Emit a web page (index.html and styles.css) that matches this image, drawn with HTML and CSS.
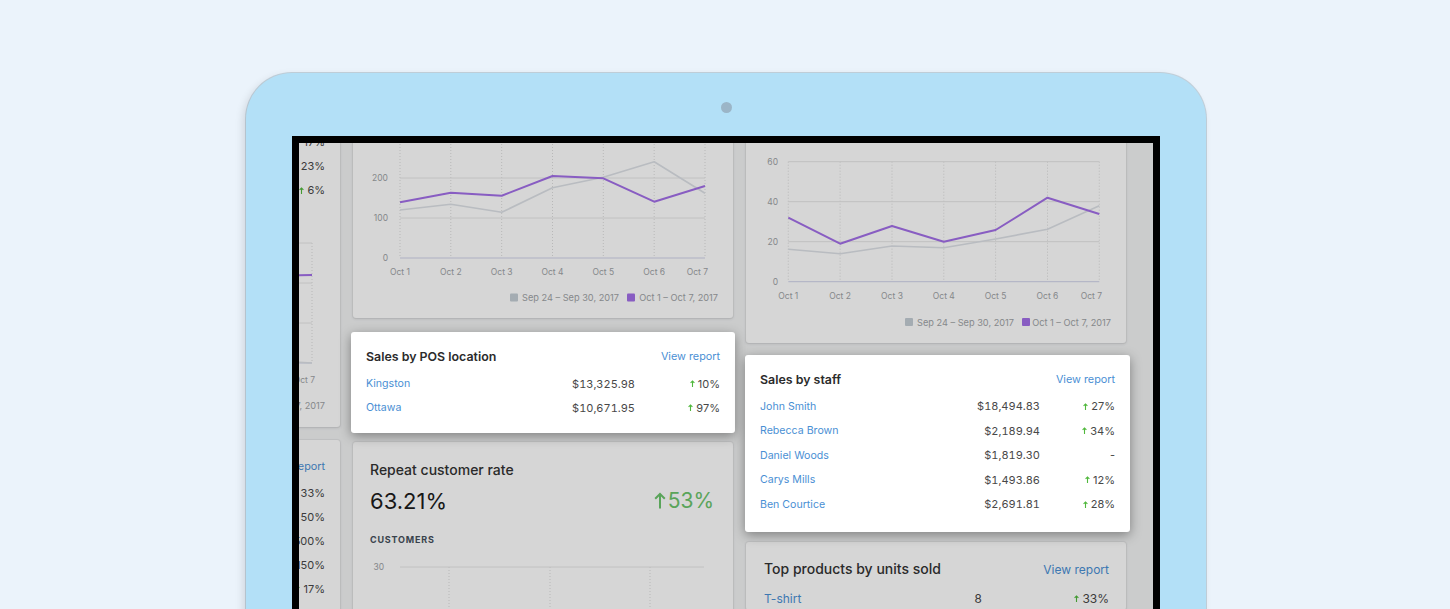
FILE: index.html
```html
<!DOCTYPE html>
<html lang="en">
<head>
<meta charset="utf-8">
<title>Dashboard on tablet</title>
<link rel="stylesheet" href="styles.css">
</head>
<body>
<div class="tablet">
  <div class="camera"></div>
  <div class="screen">
    <div class="dash">
      <!-- partially visible left column -->
      <div class="col col0">
        <div class="card cardA">
          <div class="rows">
            <div class="row r85"><span class="link">Online Store</span><span class="amt">$4,512.30</span><span class="pct"><svg class="arr" viewBox="0 0 5 7"><path d="M2.5 7V1M0.6 2.9L2.5 1L4.4 2.9"/></svg>17%</span></div>
            <div class="row r85"><span class="link">Point of Sale</span><span class="amt">$3,120.75</span><span class="pct"><svg class="arr" viewBox="0 0 5 7"><path d="M2.5 7V1M0.6 2.9L2.5 1L4.4 2.9"/></svg>23%</span></div>
            <div class="row r85"><span class="link">Facebook</span><span class="amt">$1,024.10</span><span class="pct"><svg class="arr" viewBox="0 0 5 7"><path d="M2.5 7V1M0.6 2.9L2.5 1L4.4 2.9"/></svg>6%</span></div>
          </div>
          <svg class="chart" width="380" height="225" viewBox="0 0 380 225">
            <g class="vgrid">
              <line x1="47" y1="41" x2="47" y2="161"/><line x1="97.8" y1="41" x2="97.8" y2="161"/><line x1="148.7" y1="41" x2="148.7" y2="161"/><line x1="199.5" y1="41" x2="199.5" y2="161"/><line x1="250.3" y1="41" x2="250.3" y2="161"/><line x1="301.2" y1="41" x2="301.2" y2="161"/><line x1="352" y1="41" x2="352" y2="161"/>
            </g>
            <g class="hgrid"><line x1="47" y1="41" x2="352" y2="41"/><line x1="47" y1="81" x2="352" y2="81"/><line x1="47" y1="121" x2="352" y2="121"/></g>
            <line class="base" x1="47" y1="161" x2="352" y2="161"/>
            <g class="ax"><text x="35" y="44" text-anchor="end">30</text><text x="35" y="84" text-anchor="end">20</text><text x="35" y="124" text-anchor="end">10</text><text x="35" y="164" text-anchor="end">0</text></g>
            <polyline class="l-gray" points="47,130 97.8,120 148.7,135 199.5,140 250.3,150 301.2,158 352,161"/>
            <polyline class="l-purple" points="47,110 97.8,96 148.7,104 199.5,88 250.3,92 301.2,74 352,73"/>
            <g class="ax"><text x="47" y="181" text-anchor="middle">Oct 1</text><text x="97.8" y="181" text-anchor="middle">Oct 2</text><text x="148.7" y="181" text-anchor="middle">Oct 3</text><text x="199.5" y="181" text-anchor="middle">Oct 4</text><text x="250.3" y="181" text-anchor="middle">Oct 5</text><text x="301.2" y="181" text-anchor="middle">Oct 6</text><text x="355" y="181" text-anchor="end">Oct 7</text></g>
            <rect class="sq-gray" x="157" y="199.5" width="8" height="8" rx="1"/><text class="lg" x="266" y="207" text-anchor="end">Sep 24 – Sep 30, 2017</text>
            <rect class="sq-purple" x="274" y="199.5" width="8" height="8" rx="1"/><text class="lg" x="365" y="207" text-anchor="end">Oct 1 – Oct 7, 2017</text>
          </svg>
        </div>
        <div class="card cardB">
          <div class="head h28"><span class="title">Sales by traffic source</span><span class="link">View report</span></div>
          <div class="row r85"><span class="link">Direct</span><span class="amt">$812.40</span><span class="pct"><svg class="arr" viewBox="0 0 5 7"><path d="M2.5 7V1M0.6 2.9L2.5 1L4.4 2.9"/></svg>33%</span></div>
          <div class="row r85"><span class="link">Search</span><span class="amt">$640.00</span><span class="pct"><svg class="arr" viewBox="0 0 5 7"><path d="M2.5 7V1M0.6 2.9L2.5 1L4.4 2.9"/></svg>50%</span></div>
          <div class="row r85"><span class="link">Social</span><span class="amt">$310.25</span><span class="pct"><svg class="arr" viewBox="0 0 5 7"><path d="M2.5 7V1M0.6 2.9L2.5 1L4.4 2.9"/></svg>500%</span></div>
          <div class="row r85"><span class="link">Email</span><span class="amt">$204.80</span><span class="pct"><svg class="arr" viewBox="0 0 5 7"><path d="M2.5 7V1M0.6 2.9L2.5 1L4.4 2.9"/></svg>150%</span></div>
          <div class="row r85"><span class="link">Unknown</span><span class="amt">$98.15</span><span class="pct"><svg class="arr" viewBox="0 0 5 7"><path d="M2.5 7V1M0.6 2.9L2.5 1L4.4 2.9"/></svg>17%</span></div>
        </div>
      </div>

      <!-- middle column -->
      <div class="col col1">
        <div class="card chart1">
          <svg class="chart" width="380" height="200" viewBox="0 0 380 200">
            <g class="vgrid">
              <line x1="47" y1="20" x2="47" y2="140"/><line x1="97.8" y1="20" x2="97.8" y2="140"/><line x1="148.7" y1="20" x2="148.7" y2="140"/><line x1="199.5" y1="20" x2="199.5" y2="140"/><line x1="250.3" y1="20" x2="250.3" y2="140"/><line x1="301.2" y1="20" x2="301.2" y2="140"/><line x1="352" y1="20" x2="352" y2="140"/>
            </g>
            <g class="hgrid"><line x1="47" y1="20" x2="352" y2="20"/><line x1="47" y1="60" x2="352" y2="60"/><line x1="47" y1="100" x2="352" y2="100"/></g>
            <line class="base" x1="47" y1="140" x2="352" y2="140"/>
            <g class="ax"><text x="35" y="23" text-anchor="end">300</text><text x="35" y="63" text-anchor="end">200</text><text x="35" y="103" text-anchor="end">100</text><text x="35" y="143" text-anchor="end">0</text></g>
            <polyline class="l-gray" points="47,92 97.8,86.3 148.7,94.3 199.5,69.7 250.3,59.3 301.2,43.7 352,75.3"/>
            <polyline class="l-purple" points="47,84.3 97.8,74.7 148.7,77.7 199.5,58 250.3,60.3 301.2,83.7 352,68"/>
            <g class="ax"><text x="47" y="156.5" text-anchor="middle">Oct 1</text><text x="97.8" y="156.5" text-anchor="middle">Oct 2</text><text x="148.7" y="156.5" text-anchor="middle">Oct 3</text><text x="199.5" y="156.5" text-anchor="middle">Oct 4</text><text x="250.3" y="156.5" text-anchor="middle">Oct 5</text><text x="301.2" y="156.5" text-anchor="middle">Oct 6</text><text x="355" y="156.5" text-anchor="end">Oct 7</text></g>
            <rect class="sq-gray" x="157" y="175.5" width="8" height="8" rx="1"/><text class="lg" x="266" y="183" text-anchor="end">Sep 24 – Sep 30, 2017</text>
            <rect class="sq-purple" x="274" y="175.5" width="8" height="8" rx="1"/><text class="lg" x="365" y="183" text-anchor="end">Oct 1 – Oct 7, 2017</text>
          </svg>
        </div>

        <div class="card hl pos">
          <div class="head"><span class="title">Sales by POS location</span><span class="link">View report</span></div>
          <div class="row r85"><span class="link">Kingston</span><span class="amt">$13,325.98</span><span class="pct"><svg class="arr" viewBox="0 0 5 7"><path d="M2.5 7V1M0.6 2.9L2.5 1L4.4 2.9"/></svg>10%</span></div>
          <div class="row r85"><span class="link">Ottawa</span><span class="amt">$10,671.95</span><span class="pct"><svg class="arr" viewBox="0 0 5 7"><path d="M2.5 7V1M0.6 2.9L2.5 1L4.4 2.9"/></svg>97%</span></div>
        </div>

        <div class="card repeat">
          <div class="rc-in">
            <div class="rc-title">Repeat customer rate</div>
            <div class="big"><span>63.21%</span><span class="up"><svg class="bigarr" viewBox="0 0 12 17"><path d="M6 16.5V2M1.2 6.8L6 2L10.8 6.8"/></svg>53%</span></div>
            <div class="caps">Customers</div>
          </div>
          <svg class="chart" width="380" height="80" viewBox="0 0 380 80">
            <g class="vgrid"><line x1="96" y1="11" x2="96" y2="80"/><line x1="197" y1="11" x2="197" y2="80"/><line x1="297" y1="11" x2="297" y2="80"/></g>
            <line class="hline" x1="47" y1="11" x2="351" y2="11"/>
            <text class="ax" x="31" y="14" text-anchor="end">30</text>
          </svg>
        </div>
      </div>

      <!-- right column -->
      <div class="col col2">
        <div class="card chart2">
          <svg class="chart" width="380" height="220" viewBox="0 0 380 220">
            <g class="vgrid">
              <line x1="42.3" y1="38.7" x2="42.3" y2="158.7"/><line x1="94.1" y1="38.7" x2="94.1" y2="158.7"/><line x1="146" y1="38.7" x2="146" y2="158.7"/><line x1="197.8" y1="38.7" x2="197.8" y2="158.7"/><line x1="249.6" y1="38.7" x2="249.6" y2="158.7"/><line x1="301.5" y1="38.7" x2="301.5" y2="158.7"/><line x1="353.3" y1="38.7" x2="353.3" y2="158.7"/>
            </g>
            <g class="hgrid"><line x1="42.3" y1="38.7" x2="353.3" y2="38.7"/><line x1="42.3" y1="78.7" x2="353.3" y2="78.7"/><line x1="42.3" y1="118.7" x2="353.3" y2="118.7"/></g>
            <line class="base" x1="42.3" y1="158.7" x2="353.3" y2="158.7"/>
            <g class="ax"><text x="32" y="41.7" text-anchor="end">60</text><text x="32" y="81.7" text-anchor="end">40</text><text x="32" y="121.7" text-anchor="end">20</text><text x="32" y="161.7" text-anchor="end">0</text></g>
            <polyline class="l-gray" points="42.3,126.3 94.1,130.7 146,123 197.8,124.7 249.6,116 301.5,106.3 353.3,82.7"/>
            <polyline class="l-purple" points="42.3,94.7 94.1,120.7 146,103 197.8,118.7 249.6,107 301.5,74.7 353.3,91"/>
            <g class="ax"><text x="42.3" y="175.5" text-anchor="middle">Oct 1</text><text x="94.1" y="175.5" text-anchor="middle">Oct 2</text><text x="146" y="175.5" text-anchor="middle">Oct 3</text><text x="197.8" y="175.5" text-anchor="middle">Oct 4</text><text x="249.6" y="175.5" text-anchor="middle">Oct 5</text><text x="301.5" y="175.5" text-anchor="middle">Oct 6</text><text x="356" y="175.5" text-anchor="end">Oct 7</text></g>
            <rect class="sq-gray" x="159" y="195" width="8" height="8" rx="1"/><text class="lg" x="268" y="202.5" text-anchor="end">Sep 24 – Sep 30, 2017</text>
            <rect class="sq-purple" x="276" y="195" width="8" height="8" rx="1"/><text class="lg" x="365" y="202.5" text-anchor="end">Oct 1 – Oct 7, 2017</text>
          </svg>
        </div>

        <div class="card hl staff">
          <div class="head"><span class="title">Sales by staff</span><span class="link">View report</span></div>
          <div class="row r75"><span class="link">John Smith</span><span class="amt">$18,494.83</span><span class="pct"><svg class="arr" viewBox="0 0 5 7"><path d="M2.5 7V1M0.6 2.9L2.5 1L4.4 2.9"/></svg>27%</span></div>
          <div class="row r75"><span class="link">Rebecca Brown</span><span class="amt">$2,189.94</span><span class="pct"><svg class="arr" viewBox="0 0 5 7"><path d="M2.5 7V1M0.6 2.9L2.5 1L4.4 2.9"/></svg>34%</span></div>
          <div class="row r75"><span class="link">Daniel Woods</span><span class="amt">$1,819.30</span><span class="pct">-</span></div>
          <div class="row r75"><span class="link">Carys Mills</span><span class="amt">$1,493.86</span><span class="pct"><svg class="arr" viewBox="0 0 5 7"><path d="M2.5 7V1M0.6 2.9L2.5 1L4.4 2.9"/></svg>12%</span></div>
          <div class="row r75"><span class="link">Ben Courtice</span><span class="amt">$2,691.81</span><span class="pct"><svg class="arr" viewBox="0 0 5 7"><path d="M2.5 7V1M0.6 2.9L2.5 1L4.4 2.9"/></svg>28%</span></div>
        </div>

        <div class="card products">
          <div class="tp-title"><span class="rc-title">Top products by units sold</span><span class="link">View report</span></div>
          <div class="row r127"><span class="link">T-shirt</span><span class="amt">8</span><span class="pct"><svg class="arr" viewBox="0 0 5 7"><path d="M2.5 7V1M0.6 2.9L2.5 1L4.4 2.9"/></svg>33%</span></div>
        </div>
      </div>
    </div>
    <div class="dim"></div>
  </div>
</div>
</body>
</html>
```
FILE: styles.css
```css
* { box-sizing: border-box; }
html, body { margin: 0; height: 609px; overflow: hidden; }
body {
  background: #ebf3fb;
  font-family: "Inter", "Noto Sans", sans-serif;
  color: #212b36;
}

/* device */
.tablet {
  width: 960px;
  height: 700px;
  margin: 73px 0 0 246px;
  padding-top: 29px;
  background: #b3e0f7;
  border-radius: 46px 46px 0 0;
  box-shadow: 0 0 0 1px rgba(120, 145, 160, 0.35), -3px 3px 8px rgba(0, 0, 0, 0.12);
}
.camera {
  width: 11px;
  height: 11px;
  margin: 0 auto 23px;
  border-radius: 50%;
  background: #9bb5c7;
}
.screen {
  position: relative;
  isolation: isolate;
  height: 620px;
  margin: 0 46px;
  border: 7px solid #000;
  border-bottom: 0;
  background: #f2f3f4;
  overflow: hidden;
}
.dim {
  position: absolute;
  inset: 0;
  background: rgba(0, 0, 0, 0.16);
  z-index: 1;
}

/* dashboard */
.dash {
  display: flex;
  justify-content: flex-end;
  align-items: flex-start;
  gap: 13px;
  padding-right: 27px;
}
.col {
  width: 380px;
  flex-shrink: 0;
  display: flex;
  flex-direction: column;
}
.col0 { margin-top: -13px; }
.col1 { margin-top: -25px; }
.col2 { margin-top: -20px; }

.card {
  background: #fff;
  border-radius: 3px;
  box-shadow: 0 0 0 1px rgba(63, 63, 68, 0.05), 0 1px 3px rgba(63, 63, 68, 0.15);
}
.hl {
  position: relative;
  z-index: 2;
  box-shadow: 0 3px 12px rgba(0, 0, 0, 0.38);
}
.chart { display: block; }

.cardA { padding: 0; }
.cardA .rows { padding: 0 15px; }
.cardB { margin-top: 13px; padding: 12.7px 15px 14px; }

.pos { margin: 14px -2px 0 -2px; padding: 11.7px 15px 13.3px; }
.staff { margin: 12px -4px 0 -1px; padding: 11px 15px 15.5px; }
.staff .row { height: 24.5px; }

.head {
  display: flex;
  justify-content: space-between;
  align-items: center;
  height: 26px;
  margin-bottom: 2px;
}
.head.h28 { height: 28px; margin-bottom: 0; }
.title {
  font-size: 12.4px;
  font-weight: 600;
  color: #2b2b2b;
}
.link {
  font-size: 10.6px;
  color: #4a8fd4;
  white-space: nowrap;
}
.head .link { font-size: 10.8px; }

.row {
  display: grid;
  align-items: center;
  height: 24px;
  font-size: 11px;
  color: #484848;
  white-space: nowrap;
}
.r85 { grid-template-columns: 1fr auto 85px; }
.r75 { grid-template-columns: 1fr auto 75px; }
.r127 { grid-template-columns: 1fr auto 127px; }
.amt {
  text-align: right;
  font-variant-numeric: tabular-nums;
}
.pct {
  display: flex;
  justify-content: flex-end;
  align-items: center;
  gap: 3px;
}
.arr {
  width: 5px;
  height: 7px;
  fill: none;
  stroke: #50b83c;
  stroke-width: 1.1;
}

/* repeat customer */
.repeat { margin-top: 9px; padding-top: 20px; }
.rc-in { padding: 0 19px 0 17px; }
.rc-title {
  font-size: 14px;
  font-weight: 500;
  line-height: 16px;
  color: #333;
}
.big {
  display: flex;
  justify-content: space-between;
  align-items: center;
  height: 30px;
  margin-top: 8px;
  font-size: 22px;
  color: #1c1c1c;
}
.big .up {
  display: flex;
  align-items: center;
  gap: 2px;
  font-size: 21px;
  color: #6cc46c;
}
.bigarr {
  width: 12px;
  height: 17px;
  fill: none;
  stroke: #6cc46c;
  stroke-width: 2;
}
.caps {
  margin-top: 18px;
  font-size: 9px;
  line-height: 12px;
  font-weight: 700;
  letter-spacing: 0.8px;
  text-transform: uppercase;
  color: #454f5b;
}
.repeat .chart { margin-top: 10px; }

/* top products */
.products { margin-top: 10px; padding: 18px 17px 0 18px; }
.tp-title {
  display: flex;
  justify-content: space-between;
  align-items: center;
  height: 18px;
  margin-bottom: 8px;
}
.products .link { font-size: 12px; }
.products .row { font-size: 12px; }

/* chart parts */
.ax {
  font-family: "Inter", "Noto Sans", sans-serif;
  font-size: 8.5px;
  fill: #a0a3a6;
}
.lg {
  font-family: "Inter", "Noto Sans", sans-serif;
  font-size: 9.2px;
  fill: #a0a3a6;
}
.vgrid line {
  stroke: #dcdcdc;
  stroke-width: 1;
  stroke-dasharray: 1 2;
}
.hgrid line, .hline {
  stroke: #e6e6e6;
  stroke-width: 1;
}
.base {
  stroke: #cfd3ea;
  stroke-width: 1;
}
.l-purple {
  fill: none;
  stroke: #a36fe8;
  stroke-width: 2;
  stroke-linejoin: round;
}
.l-gray {
  fill: none;
  stroke: #dde1e6;
  stroke-width: 1.6;
  stroke-linejoin: round;
}
.sq-gray { fill: #c4cdd5; }
.sq-purple { fill: #a36fe8; }
```
